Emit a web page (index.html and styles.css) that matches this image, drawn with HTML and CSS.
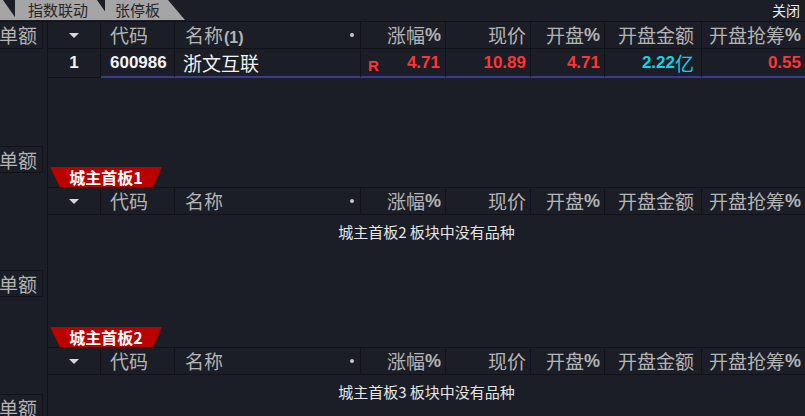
FILE: index.html
```html
<!DOCTYPE html>
<html lang="zh-CN">
<head>
<meta charset="utf-8">
<title>城主首板</title>
<link rel="stylesheet" href="styles.css">
</head>
<body>
<div class="tabbar">
  <div class="tab tab-prev"></div>
  <div class="tab tab-idx">指数联动</div>
  <div class="tab tab-zt">张停板</div>
  <div class="close">关闭</div>
</div>
<div class="content">
  <div class="side">
    <div class="side-cell side-first">单额</div>
    <div class="side-cell">单额</div>
    <div class="side-cell">单额</div>
    <div class="side-cell">单额</div>
  </div>
  <div class="main">
    <section class="sec sec-first">
      <div class="row head">
        <div class="c c-center"><span class="arrow"></span></div>
        <div class="c c-left">代码</div>
        <div class="c c-name"><span>名称<span class="num-h">(1)</span></span><span class="dot"></span></div>
        <div class="c c-right">涨幅<span class="pct">%</span></div>
        <div class="c c-right">现价</div>
        <div class="c c-right">开盘<span class="pct">%</span></div>
        <div class="c c-right pr7">开盘金额</div>
        <div class="c c-right">开盘抢筹<span class="pct">%</span></div>
      </div>
      <div class="row data">
        <div class="c c-center first"><span class="num white">1</span></div>
        <div class="c c-left"><span class="num white">600986</span></div>
        <div class="c c-left name-val">浙文互联</div>
        <div class="c c-split"><span class="r-flag">R</span><span class="num red">4.71</span></div>
        <div class="c c-right"><span class="num red">10.89</span></div>
        <div class="c c-right"><span class="num red">4.71</span></div>
        <div class="c c-right pr7"><span class="num cyan">2.22</span><span class="cyan yi">亿</span></div>
        <div class="c c-right"><span class="num red">0.55</span></div>
      </div>
    </section>
    <section class="sec">
      <div class="label">城主首板1</div>
      <div class="row head head-top">
        <div class="c c-center"><span class="arrow"></span></div>
        <div class="c c-left">代码</div>
        <div class="c c-name"><span>名称</span><span class="dot"></span></div>
        <div class="c c-right">涨幅<span class="pct">%</span></div>
        <div class="c c-right">现价</div>
        <div class="c c-right">开盘<span class="pct">%</span></div>
        <div class="c c-right pr7">开盘金额</div>
        <div class="c c-right">开盘抢筹<span class="pct">%</span></div>
      </div>
      <div class="msg">城主首板2 板块中没有品种</div>
    </section>
    <section class="sec">
      <div class="label">城主首板2</div>
      <div class="row head head-top">
        <div class="c c-center"><span class="arrow"></span></div>
        <div class="c c-left">代码</div>
        <div class="c c-name"><span>名称</span><span class="dot"></span></div>
        <div class="c c-right">涨幅<span class="pct">%</span></div>
        <div class="c c-right">现价</div>
        <div class="c c-right">开盘<span class="pct">%</span></div>
        <div class="c c-right pr7">开盘金额</div>
        <div class="c c-right">开盘抢筹<span class="pct">%</span></div>
      </div>
      <div class="msg">城主首板3 板块中没有品种</div>
    </section>
  </div>
</div>
</body>
</html>
```

FILE: styles.css
```css
* { box-sizing: border-box; }

body {
  margin: 0;
  width: 805px;
  height: 416px;
  overflow: hidden;
  background: #1b1e26;
  font-family: "Noto Sans CJK SC", "Liberation Sans", sans-serif;
  color: #b4b4b4;
}

/* ---------- tab bar ---------- */
.tabbar {
  display: flex;
  align-items: flex-start;
  height: 22px;
  border-bottom: 1px solid #111318;
}

.tab {
  height: 20px;
  background: #a5a5a5;
  color: #262626;
  font-size: 15px;
  line-height: 20px;
  white-space: nowrap;
  clip-path: polygon(0 0, calc(100% - 14px) 0, 100% 100%, 0 100%);
}

.tab-prev {
  width: 17px;
}

.tab-idx {
  width: 96px;
  margin-left: -2px;
  padding-left: 13px;
}

.tab-zt {
  width: 80px;
  margin-left: -6px;
  padding-left: 10px;
  clip-path: polygon(0 0, calc(100% - 17px) 0, 100% 100%, 0 100%);
}

.close {
  margin-left: auto;
  padding-right: 5px;
  font-size: 14px;
  line-height: 20px;
  color: #ececec;
}

/* ---------- layout ---------- */
.content {
  display: flex;
  height: 394px;
}

.side {
  width: 43px;
  margin-right: 4px;
  display: flex;
  flex-direction: column;
  gap: 97px;
  overflow: hidden;
}

.side-cell {
  flex: none;
  height: 27px;
  border-top: 1px solid #111318;
  border-bottom: 1px solid #111318;
  border-right: 1px solid #111318;
  display: flex;
  align-items: center;
  justify-content: flex-end;
  padding-right: 5px;
  font-size: 19px;
  line-height: 24px;
  white-space: nowrap;
  color: #b4b4b4;
}

.side-first {
  border-top: none;
}

.main {
  flex: 1;
  border-left: 1px solid #111318;
  overflow: hidden;
}

.sec {
  height: 160px;
}

.sec-first {
  height: 145px;
}

/* ---------- rows ---------- */
.row {
  display: grid;
  grid-template-columns: 53px 74px 186px 85px 85px 74px 97px 1fr;
}

.c {
  display: flex;
  align-items: center;
  border-right: 1px solid #111318;
  white-space: nowrap;
}

.c:last-child {
  border-right: none;
}

.head {
  height: 27px;
  border-bottom: 1px solid #111318;
  font-size: 19px;
  line-height: 24px;
  color: #b4b4b4;
}

.head-top {
  height: 28px;
  border-top: 1px solid #111318;
}

.c-center { justify-content: center; }
.c-left { padding-left: 9px; }
.c-right { justify-content: flex-end; padding-right: 4px; }
.pr7 { padding-right: 7px; }

.c-name {
  justify-content: space-between;
  padding-left: 10px;
  padding-right: 6px;
}

.c-split {
  justify-content: space-between;
  padding-left: 7px;
  padding-right: 5px;
}

.pct {
  font-family: "Liberation Sans", sans-serif;
  font-weight: bold;
  font-size: 18px;
}

.num-h {
  font-family: "Liberation Sans", sans-serif;
  font-weight: bold;
  font-size: 16px;
  line-height: 20px;
  margin-left: 1px;
}

.dot {
  width: 4px;
  height: 4px;
  border-radius: 50%;
  background: #c8c8c8;
}

.arrow {
  width: 0;
  height: 0;
  border-left: 5px solid transparent;
  border-right: 5px solid transparent;
  border-top: 5px solid #d8d8d8;
}

/* ---------- data row ---------- */
.data {
  height: 28px;
}

.data .c {
  border-bottom: 2px solid #3a3a8c;
}

.data .first {
  border-bottom: 1px solid #111318;
}

.num {
  font-family: "Liberation Sans", sans-serif;
  font-weight: bold;
  font-size: 17px;
  line-height: 20px;
}

.white { color: #f2f2f2; }
.red { color: #ff3434; }
.cyan { color: #10d4e6; }

.yi {
  font-size: 19px;
  line-height: 22px;
}

.name-val {
  padding-left: 8px;
  font-size: 19px;
  color: #f2f2f2;
}

.r-flag {
  align-self: flex-end;
  padding-bottom: 1px;
  font-family: "Liberation Sans", sans-serif;
  font-weight: bold;
  font-size: 15px;
  line-height: 18px;
  color: #ff3434;
}

/* ---------- section label & message ---------- */
.label {
  width: 112px;
  height: 20px;
  margin-left: 2px;
  background: #bb0000;
  clip-path: polygon(0 0, 100% 0, calc(100% - 9px) 100%, 10px 100%);
  color: #ffffff;
  font-weight: bold;
  font-size: 16px;
  line-height: 20px;
  text-align: center;
  white-space: nowrap;
}

.msg {
  padding-top: 7px;
  text-align: center;
  font-size: 15px;
  line-height: 20px;
  color: #e6e6e6;
}
```
